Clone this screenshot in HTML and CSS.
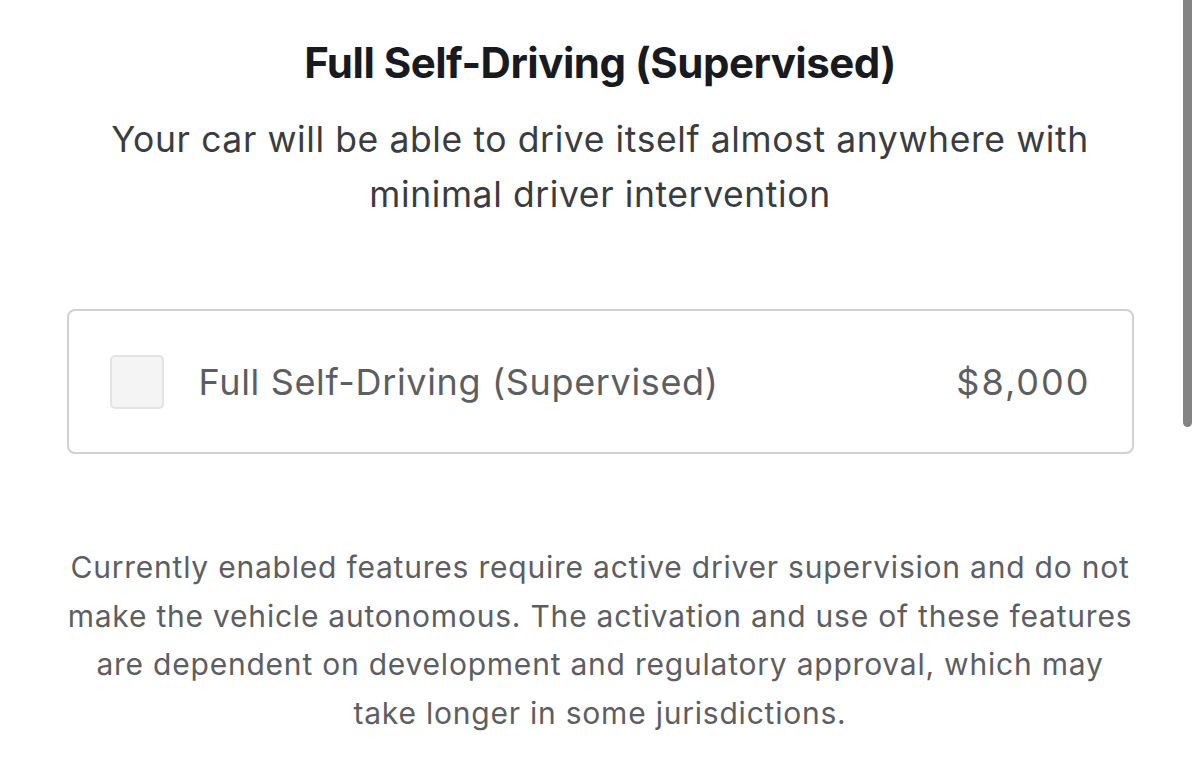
FILE: index.html
```html
<!DOCTYPE html>
<html lang="en">
<head>
<meta charset="utf-8">
<title>Full Self-Driving (Supervised)</title>
<link rel="stylesheet" href="styles.css">
</head>
<body>
<main class="page">
  <h1 class="title">Full Self-Driving (Supervised)</h1>
  <p class="subtitle">Your car will be able to drive itself almost anywhere with<br>minimal driver intervention</p>
  <label class="option">
    <span class="checkbox"></span>
    <span class="option-name">Full Self-Driving (Supervised)</span>
    <span class="price">$8,000</span>
  </label>
  <p class="disclaimer">Currently enabled features require active driver supervision and do not<br>make the vehicle autonomous. The activation and use of these features<br>are dependent on development and regulatory approval, which may<br>take longer in some jurisdictions.</p>
</main>
<div class="scrollbar"></div>
</body>
</html>
```

FILE: styles.css
```css
html, body {
  margin: 0;
  padding: 0;
  background: #ffffff;
}

body {
  font-family: Inter, "Liberation Sans", Arial, sans-serif;
  width: 1200px;
  height: 782px;
  overflow: hidden;
  position: relative;
}

.page {
  width: 1067px;
  margin: 0 auto;
  padding-top: 37px;
  display: flex;
  flex-direction: column;
  align-items: stretch;
}

.title {
  margin: 0;
  font-size: 42px;
  line-height: 52px;
  font-weight: 700;
  letter-spacing: -0.5px;
  color: #171a20;
  text-align: center;
}

.subtitle {
  margin: 23px 0 0;
  font-size: 35.5px;
  line-height: 55px;
  font-weight: 400;
  letter-spacing: 0.6px;
  color: #393c41;
  text-align: center;
}

.option {
  margin-top: 87px;
  height: 145px;
  box-sizing: border-box;
  border: 2px solid #d0d1d2;
  border-radius: 8px;
  display: flex;
  align-items: center;
  padding: 0 43px 0 41px;
  color: #5c5e62;
  font-size: 36px;
}

.checkbox {
  width: 54px;
  height: 54px;
  box-sizing: border-box;
  border: 2px solid #e3e3e3;
  border-radius: 5px;
  background: #f4f4f4;
  flex: none;
}

.option-name {
  margin-left: 35px;
  flex: 1;
  letter-spacing: 0.65px;
}

.price {
  flex: none;
  letter-spacing: 2px;
  margin-right: -2px;
}

.disclaimer {
  margin: 89px 0 0;
  font-size: 30px;
  line-height: 48.7px;
  letter-spacing: 0.78px;
  color: #5c5e62;
  text-align: center;
}

.scrollbar {
  position: absolute;
  top: 0;
  left: 1183px;
  width: 9px;
  height: 427px;
  background: #838383;
  border-radius: 0 0 5px 5px;
}
```
